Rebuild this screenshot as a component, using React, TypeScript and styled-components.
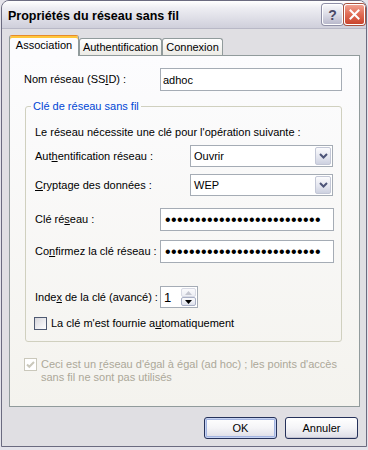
import React from 'react';
import styled, { createGlobalStyle } from 'styled-components';

const Global = createGlobalStyle`
  html, body { margin: 0; padding: 0; background: #e4e3ea; }
  body { font-family: "Liberation Sans", Arial, sans-serif; font-size: 11px; color: #000; }
  #root { width: 368px; height: 450px; }
  * { box-sizing: border-box; }
`;

const Window = styled.div`
  margin-left: 1px;
  width: 366px;
  height: 447px;
  border: 1px solid #6b6b80;
  border-radius: 8px 8px 0 0;
  background: #e0dfe3;
  display: flex;
  flex-direction: column;
  overflow: hidden;
`;

const TitleBar = styled.div`
  height: 28px;
  flex: none;
  display: flex;
  align-items: center;
  padding: 0 1px 0 6px;
  background: linear-gradient(to bottom, #ffffff 0%, #eeeef3 25%, #e0e0e8 60%, #cfcfdb 100%);
  border-bottom: 1px solid #b8b8c6;
`;

const Title = styled.div`
  flex: 1;
  font-family: "Liberation Sans", Arial, sans-serif;
  font-weight: bold;
  font-size: 12.5px;
  color: #000;
  padding-top: 2px;
`;

const CaptionButton = styled.div<{ $close?: boolean }>`
  width: 21px;
  height: 21px;
  margin-left: 1px;
  border: 1px solid #ffffff;
  border-radius: 3px;
  display: flex;
  align-items: center;
  justify-content: center;
  background: ${p => p.$close
    ? 'linear-gradient(to bottom, #f1a190 0%, #e26f58 45%, #c9442d 100%)'
    : 'linear-gradient(to bottom, #f7f7fa 0%, #dcdce6 50%, #b9b9cc 100%)'};
  box-shadow: 0 0 0 1px ${p => p.$close ? '#a8523f' : '#8f8fa6'};
  color: #4a4a66;
  font-weight: bold;
  font-size: 14px;
`;

const Body = styled.div`
  flex: 1;
  display: flex;
  flex-direction: column;
  padding: 6px 6px 0 7px;
`;

const TabStrip = styled.div`
  display: flex;
  align-items: flex-end;
  height: 20px;
  position: relative;
  z-index: 1;
`;

const Tab = styled.div<{ $w: number; $active?: boolean }>`
  width: ${p => p.$w}px;
  height: ${p => (p.$active ? 21 : 17)}px;
  margin-bottom: ${p => (p.$active ? -1 : 0)}px;
  border: 1px solid #919b9c;
  border-bottom: none;
  border-top-color: ${p => (p.$active ? '#e68b2c' : '#919b9c')};
  border-radius: 3px 3px 0 0;
  background: ${p => p.$active
    ? '#fcfcfe'
    : 'linear-gradient(to bottom, #ffffff, #ecebe6)'};
  box-shadow: ${p => (p.$active ? 'inset 0 2px 0 #ffc73c' : 'none')};
  display: flex;
  justify-content: center;
  padding-top: ${p => (p.$active ? 3 : 2)}px;
  line-height: 13px;
  white-space: nowrap;
`;

const Panel = styled.div`
  height: 352px;
  border: 1px solid #919b9c;
  background: linear-gradient(to bottom, #fcfcfe, #f4f3ee);
  padding: 12px 0 0 14px;
  display: flex;
  flex-direction: column;
`;

const Row = styled.div<{ $top?: number; $h: number }>`
  display: flex;
  align-items: center;
  margin-top: ${p => p.$top ?? 0}px;
  height: ${p => p.$h}px;
  line-height: 13px;
  white-space: nowrap;
`;

const Label = styled.div<{ $w: number }>`
  width: ${p => p.$w}px;
  flex: none;
`;

const TextField = styled.input<{ $w: number }>`
  width: ${p => p.$w}px;
  height: 23px;
  border: 1px solid #a5acb5;
  background: #fff;
  padding: 0 2px;
  font: 11px "Liberation Sans", Arial, sans-serif;
  color: #000;
  outline: none;
`;

const PasswordField = styled(TextField)`
  font-size: 16px;
  letter-spacing: 0.4px;
  padding: 0 4px;
`;

const Group = styled.fieldset`
  margin: 8px 0 0 1px;
  width: 317px;
  min-width: 0;
  border: 1px solid #d0d0bf;
  border-radius: 3px;
  padding: 0 0 11px 0;
`;

const Legend = styled.legend`
  margin-left: 5px;
  padding: 0 2px;
  line-height: 14px;
  color: #0046d5;
`;

const GroupBody = styled.div`
  padding-left: 9px;
  display: flex;
  flex-direction: column;
`;

const Combo = styled.div<{ $w: number }>`
  width: ${p => p.$w}px;
  height: 22px;
  border: 1px solid #a5acb5;
  background: #fff;
  display: flex;
  align-items: center;
  padding: 1px;
`;

const ComboValue = styled.div`
  flex: 1;
  padding-left: 2px;
`;

const DropButton = styled.div`
  width: 16px;
  height: 18px;
  border: 1px solid #c3c7d6;
  border-radius: 2px;
  background: linear-gradient(to bottom, #fbfbfd, #e2e4ee 60%, #cdd1e0);
  display: flex;
  align-items: center;
  justify-content: center;
`;

const Spin = styled.div`
  width: 38px;
  height: 22px;
  border: 1px solid #a5acb5;
  background: #fff;
  display: flex;
  padding: 1px 1px 1px 0;
`;

const SpinValue = styled.div`
  flex: 1;
  padding-left: 3px;
  font-size: 13px;
  display: flex;
  align-items: center;
`;

const SpinButtons = styled.div`
  width: 15px;
  display: flex;
  flex-direction: column;
`;

const SpinButton = styled.div<{ $disabled?: boolean }>`
  flex: 1;
  border: 1px solid ${p => (p.$disabled ? '#d8dae4' : '#a9b0c6')};
  border-radius: 2px;
  background: ${p => p.$disabled
    ? 'linear-gradient(to bottom, #fafafc, #eceef4)'
    : 'linear-gradient(to bottom, #fbfbfd, #dfe2ec)'};
  display: flex;
  align-items: center;
  justify-content: center;
`;

const CheckBox = styled.div<{ $disabled?: boolean }>`
  width: 13px;
  height: 13px;
  flex: none;
  border: 1px solid ${p => (p.$disabled ? '#cac8bb' : '#4f5a72')};
  background: ${p => (p.$disabled ? '#fff' : 'linear-gradient(135deg, #d6d6dc, #ffffff)')};
  display: flex;
  align-items: center;
  justify-content: center;
`;

const CheckRow = styled.div<{ $top: number; $indent?: number }>`
  display: flex;
  align-items: flex-start;
  gap: 4px;
  margin-top: ${p => p.$top}px;
  margin-left: ${p => p.$indent ?? 0}px;
  line-height: 13px;
`;

const DisabledText = styled.div`
  color: #aca899;
  width: 300px;
`;

const ButtonBar = styled.div`
  display: flex;
  justify-content: flex-end;
  gap: 8px;
  margin-top: 10px;
  padding-right: 2px;
`;

const Button = styled.button<{ $default?: boolean }>`
  width: 73px;
  height: 22px;
  border: 1px solid #25315a;
  border-radius: 3px;
  padding: 0;
  background: linear-gradient(to bottom, #ffffff 0%, #f4f4f7 50%, #dcdce6 100%);
  box-shadow: ${p => p.$default
    ? 'inset 0 0 0 1px #c6d3f3, inset 0 0 0 2px #a3b4e0'
    : 'inset 0 -1px 0 #c4c4d2'};
  font: 11px "Liberation Sans", Arial, sans-serif;
  color: #000;
`;

const Chevron = () => (
  <svg width="9" height="6" viewBox="0 0 9 6">
    <path d="M1 1 L4.5 4.5 L8 1" fill="none" stroke="#4d5478" strokeWidth="2" />
  </svg>
);

const Arrow = ({ up, color }: { up?: boolean; color: string }) => (
  <svg width="7" height="4" viewBox="0 0 7 4">
    <path d={up ? 'M0 4 L3.5 0 L7 4 Z' : 'M0 0 L3.5 4 L7 0 Z'} fill={color} />
  </svg>
);

const CloseX = () => (
  <svg width="11" height="11" viewBox="0 0 11 11">
    <path d="M1.5 1.5 L9.5 9.5 M9.5 1.5 L1.5 9.5" stroke="#fff" strokeWidth="2" strokeLinecap="square" />
  </svg>
);

const Tick = () => (
  <svg width="9" height="9" viewBox="0 0 9 9">
    <path d="M1 4.5 L3.3 6.8 L8 2" fill="none" stroke="#cac8bb" strokeWidth="2" />
  </svg>
);

export default function App() {
  const key = '12345678901234567890123456';
  return (
    <>
      <Global />
      <Window>
        <TitleBar>
          <Title>Propriétés du réseau sans fil</Title>
          <CaptionButton>?</CaptionButton>
          <CaptionButton $close><CloseX /></CaptionButton>
        </TitleBar>
        <Body>
          <TabStrip>
            <Tab $w={70} $active>Association</Tab>
            <Tab $w={83}>Authentification</Tab>
            <Tab $w={61}>Connexion</Tab>
          </TabStrip>
          <Panel>
            <Row $h={23}>
              <Label $w={136}>Nom réseau (SS<u>I</u>D) :</Label>
              <TextField $w={182} defaultValue="adhoc" />
            </Row>
            <Group>
              <Legend>Clé de réseau sans fil</Legend>
              <GroupBody>
                <Row $top={13} $h={13}>Le réseau nécessite une clé pour l'opération suivante :</Row>
                <Row $top={6} $h={22}>
                  <Label $w={155}>Aut<u>h</u>entification réseau :</Label>
                  <Combo $w={143}>
                    <ComboValue>Ouvrir</ComboValue>
                    <DropButton><Chevron /></DropButton>
                  </Combo>
                </Row>
                <Row $top={7} $h={22}>
                  <Label $w={155}><u>C</u>ryptage des données :</Label>
                  <Combo $w={143}>
                    <ComboValue>WEP</ComboValue>
                    <DropButton><Chevron /></DropButton>
                  </Combo>
                </Row>
                <Row $top={12} $h={23}>
                  <Label $w={125}>Clé ré<u>s</u>eau :</Label>
                  <PasswordField $w={174} type="password" defaultValue={key} />
                </Row>
                <Row $top={9} $h={23}>
                  <Label $w={125}>Co<u>n</u>firmez la clé réseau :</Label>
                  <PasswordField $w={174} type="password" defaultValue={key} />
                </Row>
                <Row $top={23} $h={22}>
                  <Label $w={125}>Inde<u>x</u> de la clé (avancé) :</Label>
                  <Spin>
                    <SpinValue>1</SpinValue>
                    <SpinButtons>
                      <SpinButton $disabled><Arrow up color="#c4c6d0" /></SpinButton>
                      <SpinButton><Arrow color="#000" /></SpinButton>
                    </SpinButtons>
                  </Spin>
                </Row>
                <CheckRow $top={9} $indent={-1}>
                  <CheckBox />
                  <span>La clé m'est fournie a<u>u</u>tomatiquement</span>
                </CheckRow>
              </GroupBody>
            </Group>
            <CheckRow $top={16}>
              <CheckBox $disabled><Tick /></CheckBox>
              <DisabledText>
                Ceci est un <u>r</u>éseau d'égal à égal (ad hoc) ; les points d'accès<br />
                sans fil ne sont pas utilisés
              </DisabledText>
            </CheckRow>
          </Panel>
          <ButtonBar>
            <Button $default>OK</Button>
            <Button>Annuler</Button>
          </ButtonBar>
        </Body>
      </Window>
    </>
  );
}
